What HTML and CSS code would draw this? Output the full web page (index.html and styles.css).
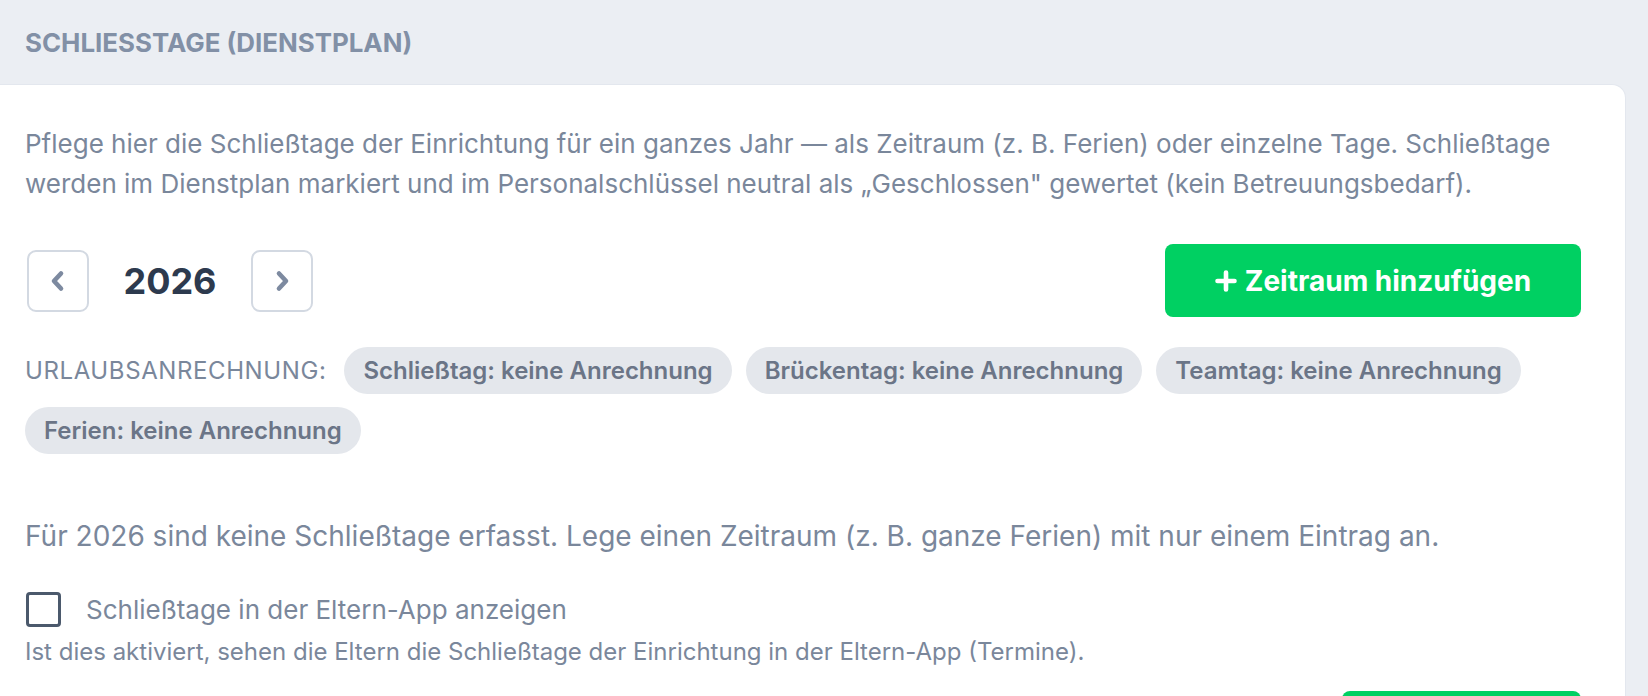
FILE: index.html
```html
<!DOCTYPE html>
<html lang="de">
<head>
<meta charset="utf-8">
<title>Schließtage</title>
<link rel="stylesheet" href="styles.css">
</head>
<body>
<header class="section-head">
  <h2 class="section-title">SCHLIESSTAGE (DIENSTPLAN)</h2>
</header>
<main class="card">
  <p class="intro">Pflege hier die Schließtage der Einrichtung für ein ganzes Jahr — als Zeitraum (z. B. Ferien) oder einzelne Tage. Schließtage werden im Dienstplan markiert und im Personalschlüssel neutral als „Geschlossen" gewertet (kein Betreuungsbedarf).</p>

  <div class="year-row">
    <div class="year-nav">
      <button class="nav-btn" aria-label="Vorheriges Jahr">
        <svg width="24" height="24" viewBox="0 0 24 24"><path d="M15 4.5 L8 12 L15 19.5" fill="none" stroke="#7d8aa0" stroke-width="4.6" stroke-linecap="round" stroke-linejoin="round"/></svg>
      </button>
      <span class="year">2026</span>
      <button class="nav-btn" aria-label="Nächstes Jahr">
        <svg width="24" height="24" viewBox="0 0 24 24"><path d="M9 4.5 L16 12 L9 19.5" fill="none" stroke="#7d8aa0" stroke-width="4.6" stroke-linecap="round" stroke-linejoin="round"/></svg>
      </button>
    </div>
    <button class="btn-green">
      <svg class="plus" width="22" height="22" viewBox="0 0 22 22"><path d="M11 2.5 V19.5 M2.5 11 H19.5" stroke="#fff" stroke-width="4.6" stroke-linecap="round"/></svg>
      <span>Zeitraum hinzufügen</span>
    </button>
  </div>

  <div class="chips">
    <span class="chips-label">URLAUBSANRECHNUNG:</span>
    <span class="chip">Schließtag: keine Anrechnung</span>
    <span class="chip">Brückentag: keine Anrechnung</span>
    <span class="chip">Teamtag: keine Anrechnung</span>
    <span class="chip">Ferien: keine Anrechnung</span>
  </div>

  <p class="empty">Für 2026 sind keine Schließtage erfasst. Lege einen Zeitraum (z. B. ganze Ferien) mit nur einem Eintrag an.</p>

  <label class="check-row">
    <span class="checkbox"></span>
    <span class="check-label">Schließtage in der Eltern-App anzeigen</span>
  </label>
  <p class="help">Ist dies aktiviert, sehen die Eltern die Schließtage der Einrichtung in der Eltern-App (Termine).</p>

  <div class="save-row">
    <button class="btn-green btn-save">Speichern</button>
  </div>
</main>
</body>
</html>
```

FILE: styles.css
```css
* { box-sizing: border-box; }

html, body {
  margin: 0;
  padding: 0;
  background: #ebeef3;
  font-family: Inter, "Noto Sans", "Liberation Sans", sans-serif;
  color: #7a879b;
  overflow: hidden;
}

.section-head {
  height: 84px;
  display: flex;
  align-items: center;
  padding-left: 25px;
}

.section-title {
  margin: 0;
  font-size: 25.9px;
  font-weight: 700;
  color: #8290a6;
}

.card {
  background: #fff;
  margin-right: 22px;
  border: 1px solid #e3e7ee;
  border-left: none;
  border-bottom: none;
  border-radius: 0 14px 0 0;
  padding: 39px 44px 40px 25px;
}

.intro {
  margin: 0;
  font-size: 26px;
  line-height: 40px;
  color: #7a879b;
}

.year-row {
  margin-top: 40px;
  display: flex;
  align-items: center;
  justify-content: space-between;
}

.year-nav {
  display: flex;
  align-items: center;
  padding-left: 2px;
}

.nav-btn {
  width: 62px;
  height: 62px;
  border: 2px solid #d3d9e2;
  border-radius: 9px;
  background: #fff;
  display: flex;
  align-items: center;
  justify-content: center;
  padding: 0;
}

.year {
  width: 162px;
  text-align: center;
  font-size: 36px;
  font-weight: 700;
  color: #2d3a4e;
}

.btn-green {
  background: #00d062;
  color: #fff;
  border: none;
  border-radius: 8px;
  height: 73px;
  width: 416px;
  display: flex;
  align-items: center;
  justify-content: center;
  gap: 8px;
  font-family: Inter, "Noto Sans", sans-serif;
  font-size: 28px;
  font-weight: 700;
}

.plus { margin-top: 1px; }

.chips {
  margin-top: 30px;
  display: flex;
  flex-wrap: wrap;
  align-items: center;
  column-gap: 14px;
  row-gap: 13px;
}

.chips-label {
  font-size: 24px;
  color: #7a879b;
  letter-spacing: 0.6px;
  margin-right: 4px;
}

.chip {
  height: 47px;
  display: inline-flex;
  align-items: center;
  padding: 0 19px;
  border-radius: 24px;
  background: #e4e7ec;
  color: #6b7587;
  font-size: 24px;
  font-weight: 600;
}

.empty {
  margin: 64px 0 0;
  font-size: 28px;
  line-height: 36px;
  color: #7a879b;
}

.check-row {
  margin-top: 38px;
  display: flex;
  align-items: center;
  gap: 25px;
}

.checkbox {
  width: 35px;
  height: 35px;
  border: 3px solid #4b596c;
  border-radius: 4px;
  margin-left: 1px;
  flex: none;
}

.check-label {
  font-size: 26px;
  line-height: 35px;
  color: #7a879b;
}

.help {
  margin: 10px 0 0;
  font-size: 24px;
  line-height: 30px;
  color: #7a879b;
}

.save-row {
  margin-top: 24px;
  display: flex;
  justify-content: flex-end;
}

.btn-save {
  width: 239px;
}
```
